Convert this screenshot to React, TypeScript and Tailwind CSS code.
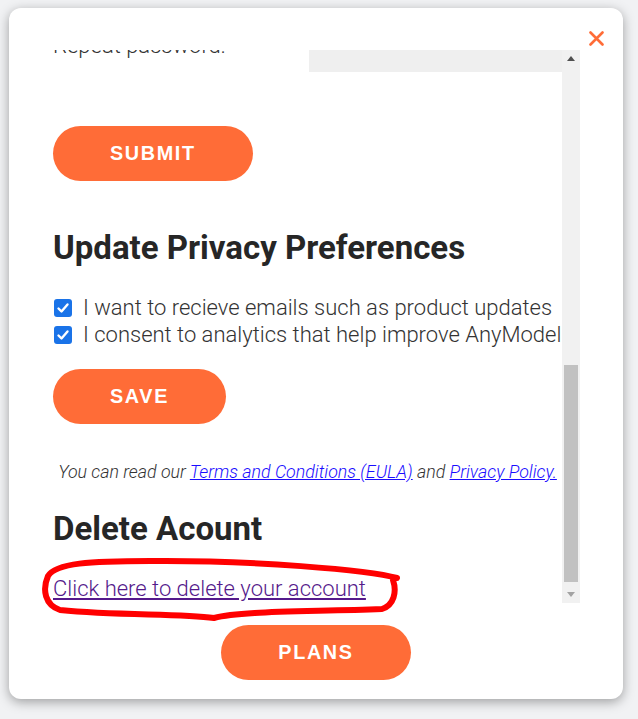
import React from 'react';

const ORANGE = 'bg-[#ff6c37]';

function PillButton({ label, className = '' }: { label: string; className?: string }) {
  return (
    <button
      className={`${ORANGE} flex h-[55px] items-center justify-center rounded-full px-[57px] text-[19.8px] font-bold uppercase tracking-[1.65px] text-white ${className}`}
      style={{ fontFamily: '"Liberation Sans", Arial, sans-serif' }}
    >
      {label}
    </button>
  );
}

function Check({ label }: { label: string }) {
  return (
    <label className="flex h-[27px] items-center gap-[11px] whitespace-nowrap">
      <span className="ml-[1px] flex h-[18px] w-[18px] shrink-0 items-center justify-center rounded-[3px] bg-[#1a73e8]">
        <svg width="14" height="14" viewBox="0 0 14 14" fill="none">
          <path d="M2.5 7.5L5.5 10.5L11.5 3.5" stroke="white" strokeWidth="2.4" strokeLinecap="round" strokeLinejoin="round" />
        </svg>
      </span>
      <span className="text-[22px] font-light leading-[27px] text-[#333]">{label}</span>
    </label>
  );
}

export default function App() {
  return (
    <div
      className="relative min-h-[719px] bg-[#f1f2f4] pl-[9px] pt-[8px]"
      style={{ fontFamily: 'Roboto, "Noto Sans", sans-serif' }}
    >
      <div className="relative flex h-[691px] w-[614px] flex-col rounded-xl bg-white shadow-[0_3px_12px_rgba(0,0,0,0.35)]">
        {/* Close */}
        <button className="absolute right-[16px] top-[20px] p-[3px]" aria-label="Close">
          <svg width="15" height="15" viewBox="0 0 15 15" fill="none">
            <path d="M1.5 1.5L13.5 13.5M13.5 1.5L1.5 13.5" stroke="#ff6c37" strokeWidth="2.6" strokeLinecap="round" />
          </svg>
        </button>

        {/* Scroll area */}
        <div className="ml-[43px] mt-[42px] flex h-[553px] w-[528px]">
          <div className="flex-1 overflow-hidden">
            <div className="-mt-[20px] pl-[1px]">
              <div className="flex h-[42px] items-start">
                <span className="mt-[2px] flex-1 text-[22px] font-light leading-[27px] text-[#333]">Repeat password:</span>
                <div className="h-[42px] w-[253px] bg-[#efefef]" />
              </div>

              <PillButton label="Submit" className="mt-[54px]" />

              <h2 className="mt-[47px] text-[33px] font-bold leading-[40px] text-[#262626]">Update Privacy Preferences</h2>

              <div className="mt-[26px]">
                <Check label="I want to recieve emails such as product updates" />
                <Check label="I consent to analytics that help improve AnyModel" />
              </div>

              <PillButton label="Save" className="mt-[21px] h-[54px]" />

              <p className="mt-[35px] text-center text-[17.8px] font-light italic leading-[26px] text-[#333]">
                You can read our{' '}
                <a href="#" className="text-[#1a0dff] underline">Terms and Conditions (EULA)</a> and{' '}
                <a href="#" className="text-[#1a0dff] underline">Privacy Policy.</a>
              </p>

              <h2 className="mt-[24px] text-[33px] font-bold leading-[40px] text-[#262626]">Delete Acount</h2>

              <a href="#" className="mt-[26px] block text-[22px] font-light leading-[27px] text-[#551a8b] underline">
                Click here to delete your account
              </a>
            </div>
          </div>

          {/* Scrollbar */}
          <div className="flex w-[18px] flex-col bg-[#f1f1f1]">
            <div className="flex h-[17px] items-center justify-center">
              <svg width="8" height="5" viewBox="0 0 8 5"><path d="M0 5L4 0L8 5Z" fill="#505050" /></svg>
            </div>
            <div className="flex-1 px-[2px] pt-[298px] pb-[4px]">
              <div className="h-full bg-[#c1c1c1]" />
            </div>
            <div className="flex h-[17px] items-center justify-center">
              <svg width="8" height="5" viewBox="0 0 8 5"><path d="M0 0L8 0L4 5Z" fill="#a3a3a3" /></svg>
            </div>
          </div>
        </div>

        <div className="mt-[22px] flex justify-center">
          <PillButton label="Plans" />
        </div>
      </div>

      {/* Red hand-drawn annotation */}
      <svg className="pointer-events-none absolute left-0 top-0" width="638" height="719" viewBox="0 0 638 719" fill="none">
        <path
          d="M397 578 C370 570, 250 560, 150 561 C90 561, 56 563, 48 576 C42 590, 45 605, 60 610 C120 616, 180 613, 214 618 C240 611, 300 612, 382 609 C394 605, 397 592, 393 580"
          stroke="#ff0000"
          strokeWidth="6"
          strokeLinecap="round"
          strokeLinejoin="round"
        />
      </svg>
    </div>
  );
}
